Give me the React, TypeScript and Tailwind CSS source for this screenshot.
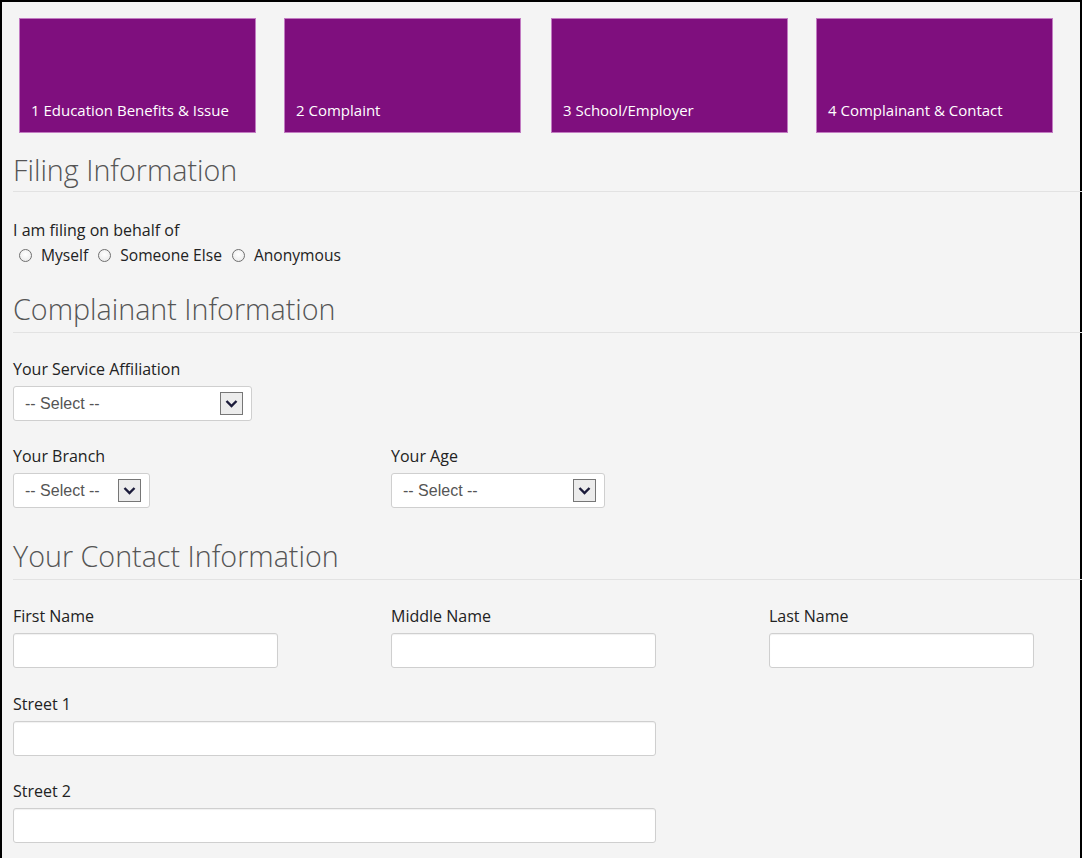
import React from "react";

const steps = [
  { label: "1 Education Benefits & Issue", ml: "" },
  { label: "2 Complaint", ml: "ml-[28px]" },
  { label: "3 School/Employer", ml: "ml-[30px]" },
  { label: "4 Complainant & Contact", ml: "ml-[28px]" },
];

const SectionTitle: React.FC<{ title: string; pb: string }> = ({ title, pb }) => (
  <div className={`border-b border-[#e2e2e2] -mr-[11px] ${pb}`}>
    <h2 className="text-[28.7px] font-light leading-[34px] text-[#555]">{title}</h2>
  </div>
);

const SelectBox: React.FC<{ width: string }> = ({ width }) => (
  <div
    className={`${width} h-[35px] bg-white border border-[#cfcfcf] rounded-[3px] flex items-center justify-between pl-[11px] pr-[8px]`}
  >
    <span className="text-[16px] text-[#555] font-['Liberation_Sans',Arial,sans-serif]">-- Select --</span>
    <span className="w-[23px] h-[23px] border border-[#767676] bg-[#ececec] flex items-center justify-center">
      <svg width="13" height="9" viewBox="0 0 13 9">
        <path d="M1.5 2 L6.5 7 L11.5 2" fill="none" stroke="#1b1b3a" strokeWidth="2.4" />
      </svg>
    </span>
  </div>
);

const TextBox: React.FC<{ width: string }> = ({ width }) => (
  <input
    type="text"
    className={`${width} h-[35px] bg-white border border-[#cfcfcf] rounded-[3px] shadow-[inset_0_1px_1px_rgba(0,0,0,0.06)] outline-none`}
  />
);

const Field: React.FC<{ label: string; children: React.ReactNode }> = ({ label, children }) => (
  <div className="flex flex-col">
    <label className="text-[16px] text-[#222] leading-[20px] mb-[7px]">{label}</label>
    {children}
  </div>
);

export default function App() {
  return (
    <div className="w-[1082px] h-[858px] overflow-hidden bg-black pl-[2px] pt-[2px] pr-[2px]">
      <div className="h-full bg-[#f4f4f4] pl-[11px] font-['Open_Sans','Noto_Sans',sans-serif] text-[#222]">
        {/* Step tiles */}
        <div className="flex pt-[16px] pl-[6px]">
          {steps.map((s) => (
            <div
              key={s.label}
              className={`w-[237px] h-[115px] bg-[#7f0f7e] border border-[#c27bc2] flex items-end pl-[11px] pb-[12px] ${s.ml}`}
            >
              <span className="text-white text-[15px] leading-[20px]">{s.label}</span>
            </div>
          ))}
        </div>

        {/* Filing */}
        <div className="mt-[20px]">
          <SectionTitle title="Filing Information" pb="pb-[4px]" />
        </div>
        <div className="mt-[28px] text-[16px] leading-[20px]">I am filing on behalf of</div>
        <div className="flex items-center mt-[5px] ml-[6px] text-[15.6px] leading-[20px]">
          {["Myself", "Someone Else", "Anonymous"].map((o) => (
            <label key={o} className="flex items-center gap-[9px] mr-[10px]">
              <span className="w-[13px] h-[13px] rounded-full border border-[#6f6f6f] bg-[radial-gradient(circle_at_50%_40%,#ffffff,#e6e6e6)]" />
              {o}
            </label>
          ))}
        </div>

        {/* Complainant */}
        <div className="mt-[27px]">
          <SectionTitle title="Complainant Information" pb="pb-[6px]" />
        </div>
        <div className="mt-[26px]">
          <Field label="Your Service Affiliation">
            <SelectBox width="w-[239px]" />
          </Field>
        </div>
        <div className="grid grid-cols-[378px_378px] mt-[25px]">
          <Field label="Your Branch">
            <SelectBox width="w-[137px]" />
          </Field>
          <Field label="Your Age">
            <SelectBox width="w-[214px]" />
          </Field>
        </div>

        {/* Contact */}
        <div className="mt-[31px]">
          <SectionTitle title="Your Contact Information" pb="pb-[6px]" />
        </div>
        <div className="grid grid-cols-[378px_378px_378px] mt-[26px]">
          <Field label="First Name">
            <TextBox width="w-[265px]" />
          </Field>
          <Field label="Middle Name">
            <TextBox width="w-[265px]" />
          </Field>
          <Field label="Last Name">
            <TextBox width="w-[265px]" />
          </Field>
        </div>
        <div className="mt-[26px]">
          <Field label="Street 1">
            <TextBox width="w-[643px]" />
          </Field>
        </div>
        <div className="mt-[25px]">
          <Field label="Street 2">
            <TextBox width="w-[643px]" />
          </Field>
        </div>
      </div>
    </div>
  );
}
